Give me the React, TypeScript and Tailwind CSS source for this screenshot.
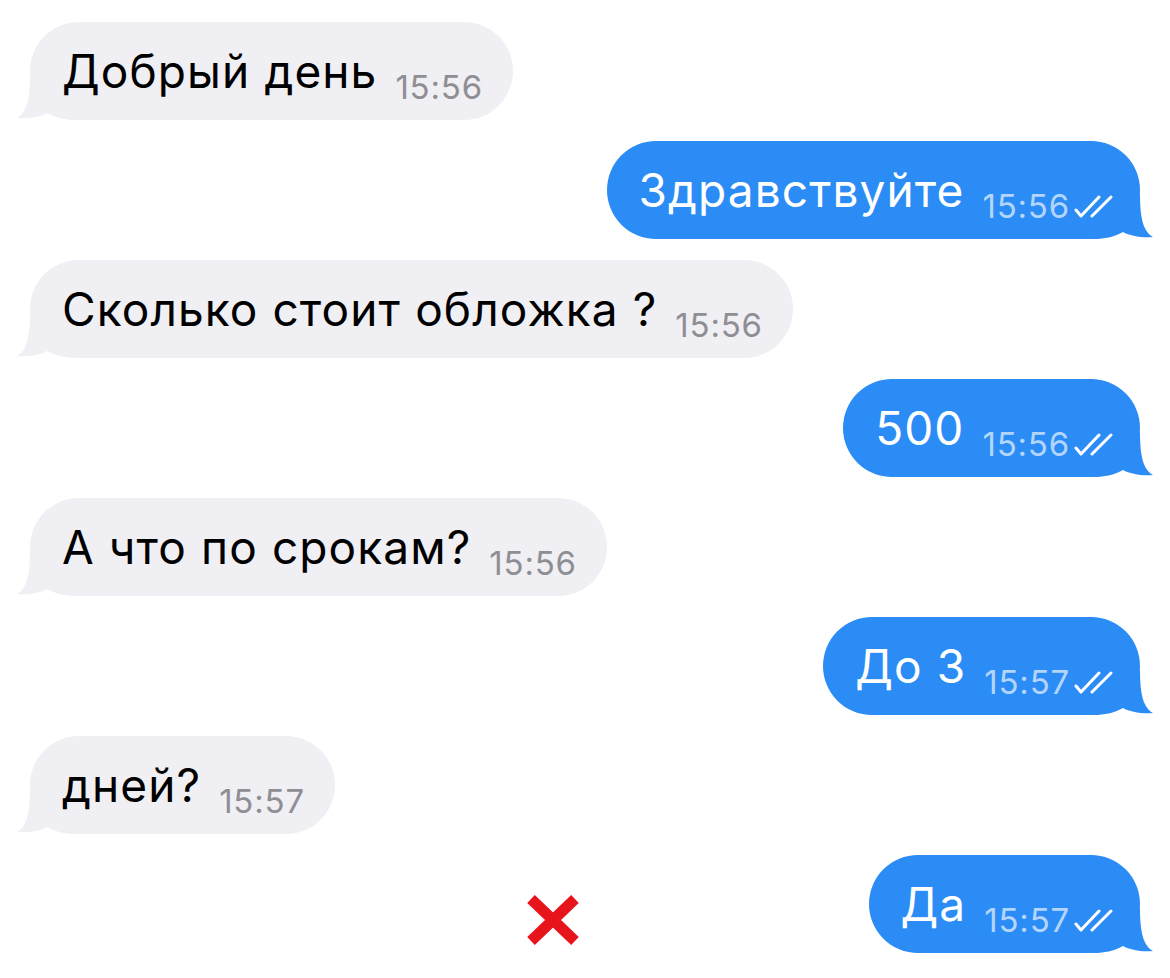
import React from 'react';

type Msg = { id: number; out: boolean; text: string; time: string };

const messages: Msg[] = [
    { id: 1, out: false, text: 'Добрый день', time: '15:56' },
    { id: 2, out: true, text: 'Здравствуйте', time: '15:56' },
    { id: 3, out: false, text: 'Сколько стоит обложка ?', time: '15:56' },
    { id: 4, out: true, text: '500', time: '15:56' },
    { id: 5, out: false, text: 'А что по срокам?', time: '15:56' },
    { id: 6, out: true, text: 'До 3', time: '15:57' },
    { id: 7, out: false, text: 'дней?', time: '15:57' },
    { id: 8, out: true, text: 'Да', time: '15:57' },
];

// bubble tail, drawn for the incoming side and mirrored for outgoing
const Tail: React.FC<{ out: boolean }> = ({ out }) => (
    <svg
        viewBox="0 0 60 44"
        className={`absolute bottom-0 w-[60px] h-[44px] ${out ? 'right-[-14px] -scale-x-100' : 'left-[-14px]'}`}
    >
        <path
            d="M14 0 C14 25 10 37 1 42 C12 43 24 41 31 37 C40 42 50 44 60 44 L60 0 Z"
            className={out ? 'fill-[#2b8cf5]' : 'fill-[#efeff4]'}
        />
    </svg>
);

const Checks = () => (
    <svg viewBox="0 0 44 24" className="w-[44px] h-[24px] ml-[2px] translate-y-[12px]" fill="none" stroke="white" strokeWidth={3} strokeLinecap="round" strokeLinejoin="round">
        <path d="M4 15 L9 21 L27 2" />
        <path d="M20 21 L39 2" />
    </svg>
);

const Bubble: React.FC<{ msg: Msg }> = ({ msg }) => (
    <div
        className={`relative h-[98px] rounded-[49px] flex items-baseline pl-[32px] ${
            msg.out ? 'bg-[#2b8cf5] text-white pr-[24px]' : 'bg-[#efeff4] text-black pr-[30px]'
        }`}
    >
        <Tail out={msg.out} />
        <span className="relative text-[46px] leading-[98px] tracking-[1.1px]">{msg.text}</span>
        <span className={`relative ml-[18px] text-[33px] tracking-[0.8px] translate-y-[11px] ${msg.out ? 'text-[#b3d5fb]' : 'text-[#8e8e93]'}`}>
            {msg.time}
        </span>
        {msg.out && <Checks />}
    </div>
);

const RedCross = () => (
    <svg viewBox="0 0 56 52" className="w-[56px] h-[52px] ml-[525px] mb-[7px]">
        <path d="M6 5 L50 47 M50 5 L6 47" stroke="#e8141b" strokeWidth={11} strokeLinecap="butt" />
    </svg>
);

export default function App() {
    return (
        <div className="w-[1170px] h-[978px] bg-white overflow-hidden font-['Inter','Liberation_Sans',sans-serif]">
            <div className="flex flex-col gap-[21px] pt-[22px] px-[30px]">
                {messages.map((msg) =>
                    msg.id === 8 ? (
                        <div key={msg.id} className="flex items-end justify-between -ml-[30px]">
                            <RedCross />
                            <Bubble msg={msg} />
                        </div>
                    ) : (
                        <div key={msg.id} className={`flex ${msg.out ? 'justify-end' : 'justify-start'}`}>
                            <Bubble msg={msg} />
                        </div>
                    )
                )}
            </div>
        </div>
    );
}
